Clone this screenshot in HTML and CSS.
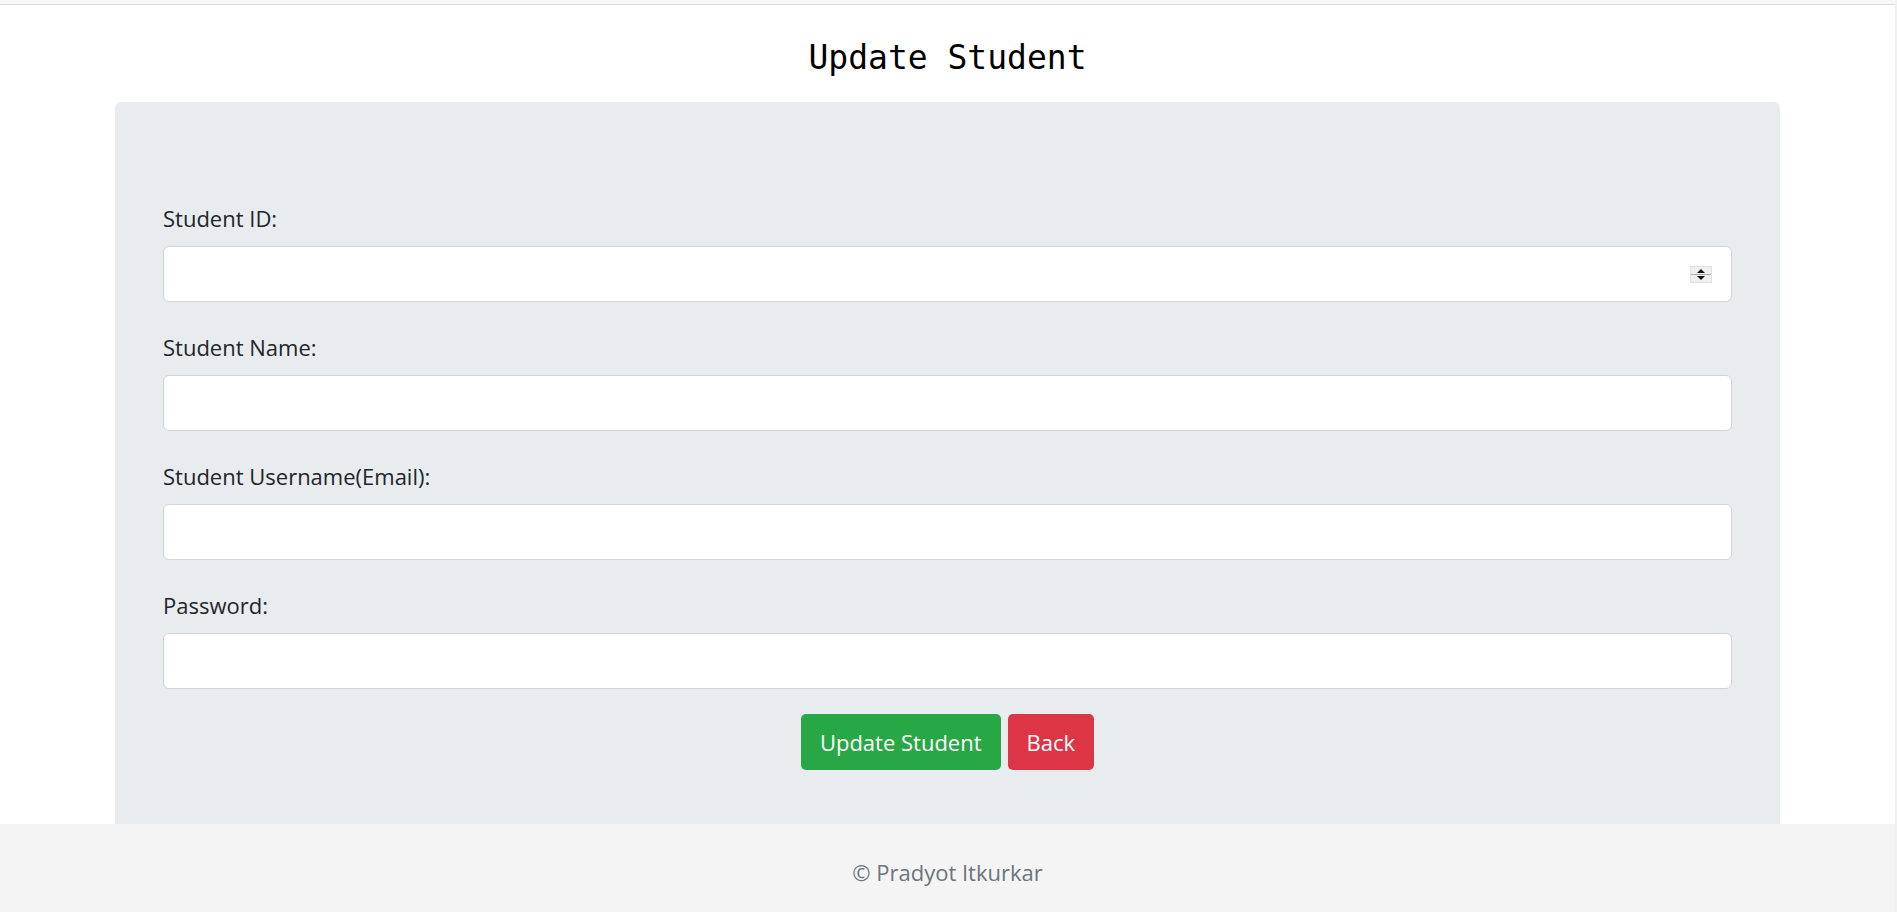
FILE: index.html
```html
<!DOCTYPE html>
<html lang="en">
<head>
<meta charset="utf-8">
<title>Update Student</title>
<link rel="stylesheet" href="styles.css">
</head>
<body>
<div class="topband"></div>
<main class="page">
  <h1 class="title">Update Student</h1>
  <section class="card">
    <form class="form">
      <div class="group">
        <label class="label" for="sid">Student ID:</label>
        <div class="field">
          <input class="input num" id="sid" type="number">
          <svg class="spin" width="22" height="17" viewBox="0 0 22 17">
            <rect x="0" y="0" width="22" height="17" fill="#efefef"/>
            <rect x="0.5" y="0.5" width="21" height="16" fill="none" stroke="#e2e2e2"/>
            <polygon points="7,7 15,7 11,3" fill="#111"/>
            <line x1="1" y1="8.5" x2="21" y2="8.5" stroke="#a9a9a9" stroke-width="1"/>
            <polygon points="7,10 15,10 11,14" fill="#111"/>
          </svg>
        </div>
      </div>
      <div class="group">
        <label class="label" for="sname">Student Name:</label>
        <input class="input" id="sname" type="text">
      </div>
      <div class="group">
        <label class="label" for="semail">Student Username(Email):</label>
        <input class="input" id="semail" type="text">
      </div>
      <div class="group group-last">
        <label class="label" for="spass">Password:</label>
        <input class="input" id="spass" type="password">
      </div>
      <div class="actions">
        <button type="button" class="btn btn-green">Update Student</button>
        <button type="button" class="btn btn-red">Back</button>
      </div>
    </form>
  </section>
</main>
<footer class="footer">© Pradyot Itkurkar</footer>
<div class="scrollbar"></div>
</body>
</html>
```
FILE: styles.css
```css
html, body {
  margin: 0;
  padding: 0;
}
body {
  background: #ffffff;
  font-family: "Open Sans", "Noto Sans", sans-serif;
  color: #212529;
  padding-right: 2px;
  min-height: 912px;
  display: flex;
  flex-direction: column;
  box-sizing: border-box;
}
.topband {
  height: 4px;
  background: #f7f7f7;
  border-bottom: 1px solid #dcdcdc;
}
.page {
  flex: 1;
  display: flex;
  flex-direction: column;
}
.title {
  margin: 33px 0 24px;
  height: 40px;
  line-height: 40px;
  text-align: center;
  font-family: "DejaVu Sans Mono", "Liberation Mono", monospace;
  font-size: 33px;
  font-weight: 400;
  color: #000;
}
.card {
  flex: 1;
  margin: 0 115px;
  background: #e9ecef;
  border-radius: 6px 6px 0 0;
  padding: 101px 48px 54px;
}
.form {
  display: flex;
  flex-direction: column;
}
.group {
  display: flex;
  flex-direction: column;
  margin-bottom: 30px;
}
.group-last {
  margin-bottom: 25px;
}
.label {
  font-size: 22px;
  line-height: 30px;
  margin-bottom: 13px;
}
.field {
  position: relative;
}
.input {
  display: block;
  width: 100%;
  box-sizing: border-box;
  height: 56px;
  border: 1px solid #ced4da;
  border-radius: 6px;
  background: #fff;
  font: inherit;
  font-size: 22px;
  padding: 0 15px;
}
.num {
  -moz-appearance: textfield;
}
.num::-webkit-inner-spin-button,
.num::-webkit-outer-spin-button {
  -webkit-appearance: none;
  margin: 0;
}
.spin {
  position: absolute;
  right: 20px;
  top: 20px;
}
.actions {
  display: flex;
  justify-content: center;
  gap: 7px;
}
.btn {
  height: 56px;
  padding: 0 19px;
  border: 0;
  border-radius: 5px;
  color: #fff;
  font-family: "Open Sans", "Noto Sans", sans-serif;
  font-size: 22px;
}
.btn-green {
  background: #28a745;
}
.btn-red {
  background: #dc3545;
}
.footer {
  height: 88px;
  line-height: 80px;
  padding-top: 8px;
  box-sizing: border-box;
  background: #f4f4f4;
  text-align: center;
  color: #6c757d;
  font-size: 22px;
}
.scrollbar {
  position: fixed;
  right: 0;
  top: 0;
  width: 2px;
  height: 100%;
  background: #f0f0f0;
}
```
